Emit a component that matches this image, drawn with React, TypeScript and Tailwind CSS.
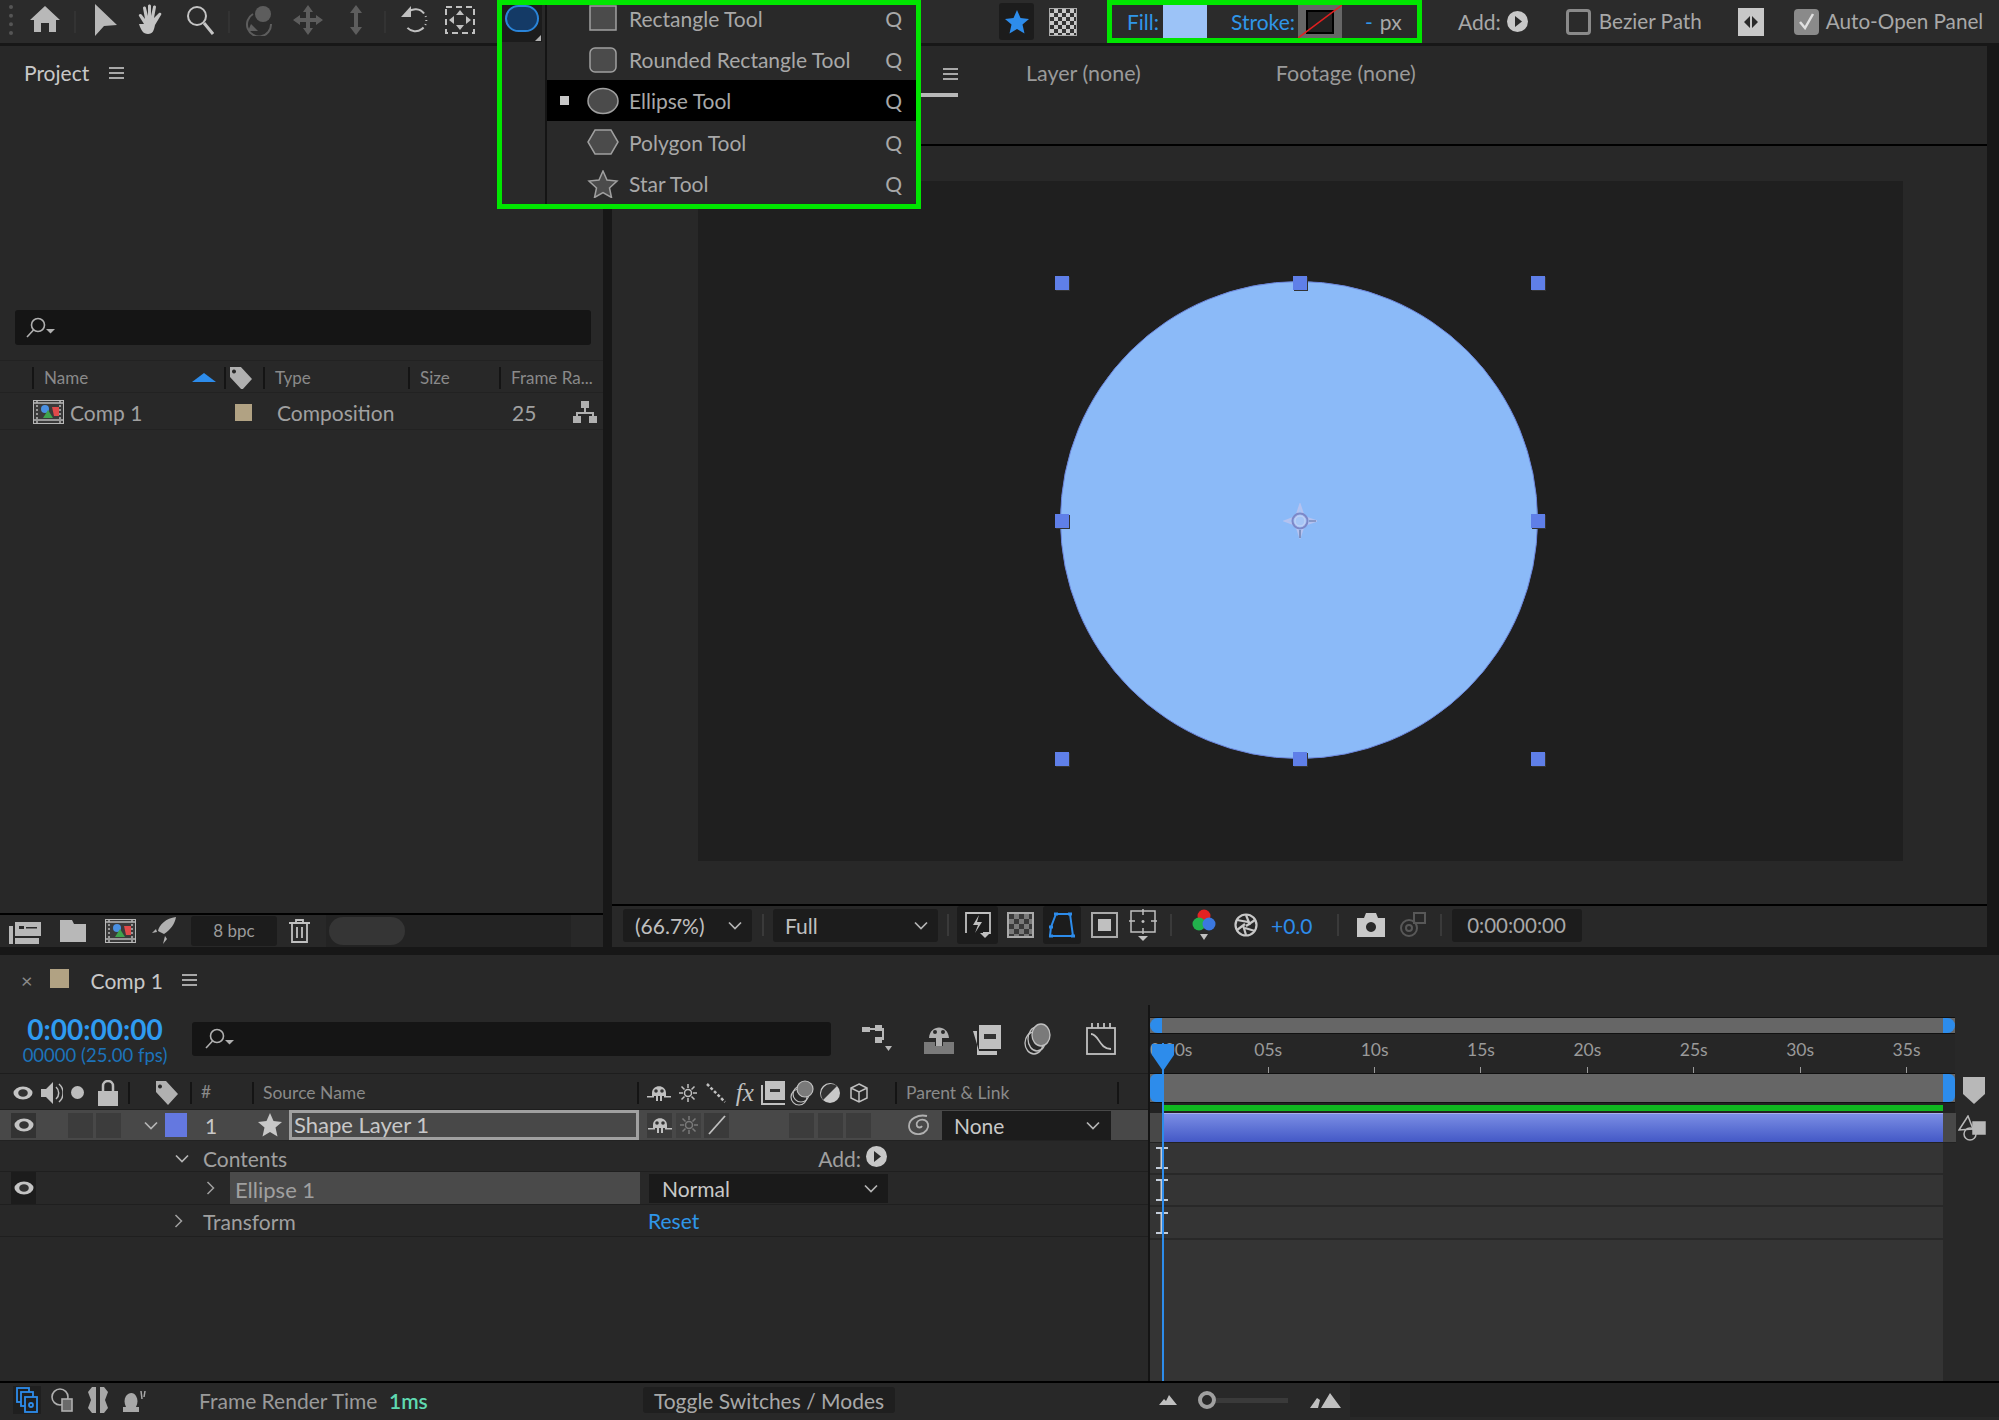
import React from 'react';

type IconProps = { className?: string };

const Hamburger = ({ className = '' }: IconProps) => (
  <div className={`flex flex-col gap-[3px] w-[15px] ${className}`}>
    <div className="h-[2px] bg-[#a8a8a8]"></div>
    <div className="h-[2px] bg-[#a8a8a8]"></div>
    <div className="h-[2px] bg-[#a8a8a8]"></div>
  </div>
);

const Chevron = ({ className = '' }: IconProps) => (
  <svg width="14" height="9" viewBox="0 0 14 9" className={className} fill="none" stroke="#b5b5b5" strokeWidth="1.7">
    <path d="M1 1.5 7 7.5 13 1.5" />
  </svg>
);

const ChevronRight = ({ className = '' }: IconProps) => (
  <svg width="9" height="14" viewBox="0 0 9 14" className={className} fill="none" stroke="#a0a0a0" strokeWidth="1.5">
    <path d="M1.5 1 7.5 7 1.5 13" />
  </svg>
);

const Eye = () => (
  <svg width="20" height="14" viewBox="0 0 20 14">
    <ellipse cx="10" cy="7" rx="9.500" ry="6.500" fill="#c4c4c4" />
    <ellipse cx="10" cy="7" rx="4.800" ry="3.800" fill="#333" />
  </svg>
);

const SearchIcon = () => (
  <svg width="32" height="24" viewBox="0 0 32 24" fill="none" stroke="#b0b0b0" strokeWidth="1.6">
    <circle cx="13" cy="9" r="6.5" />
    <path d="M8.5 14 2 21" />
    <path d="M21 13h9l-4.5 4.5Z" fill="#b0b0b0" stroke="none" />
  </svg>
);

const Tag = ({ className = '' }: IconProps) => (
  <svg width="24" height="26" viewBox="0 0 24 26" className={className}>
    <path fillRule="evenodd" d="M1 1h10l12 13-10 11L1 12ZM5 4.500a2 2 0 1 0 .01 0Z" fill="#b0b0b0" />
  </svg>
);

const Sep = ({ className = '' }: IconProps) => <div className={`w-[2px] h-[22px] shrink-0 bg-[#141414] ${className}`}></div>;

const CompIcon = () => (
  <svg width="31" height="24" viewBox="0 0 31 24">
    <rect x="0.500" y="0.500" width="30" height="23" fill="#3a3a3a" stroke="#b8b8b8" />
    <path d="M0 3h31M0 20h31" stroke="#b8b8b8" strokeWidth="1.500" />
    <path d="M4 1v22M27 1v22" stroke="#b8b8b8" strokeWidth="1.500" strokeDasharray="2 2" />
    <circle cx="12" cy="9" r="4" fill="#4a90e2" />
    <path d="M19 7h7v9h-5Z" fill="#e04a4a" />
    <path d="M15 10l5 8h-10Z" fill="#3fa34d" />
  </svg>
);

const FlowIcon = () => (
  <svg width="26" height="24" viewBox="0 0 26 24" fill="#b0b0b0">
    <rect x="9" y="1" width="8" height="7" />
    <rect x="1" y="16" width="8" height="7" />
    <rect x="17" y="16" width="8" height="7" />
    <path d="M12 8h2v4h8v4h-2v-2H6v2H4v-4h8Z" />
  </svg>
);

const PlayCircle = () => (
  <svg width="21" height="21" viewBox="0 0 21 21">
    <circle cx="10.500" cy="10.500" r="10.500" fill="#c8c8c8" />
    <path d="M8 5l7 5.500-7 5.500Z" fill="#2a2a2a" />
  </svg>
);

const LabelCube = () => <div className="w-[17px] h-[17px] bg-[#b1a283]"></div>;

const ShyIcon = () => (
  <svg width="24" height="20" viewBox="0 0 24 20" fill="#c0c0c0">
    <path d="M5 10C5 1 19 1 19 10v3h-4v5h-2v-5h-2v5H9v-5H5Z" />
    <circle cx="9" cy="8" r="1.800" fill="#333" />
    <circle cx="15" cy="8" r="1.800" fill="#333" />
    <path d="M0 13h7v1.500H0ZM17 13h7v1.500h-7Z" />
  </svg>
);

const SunIcon = ({ color = '#c0c0c0' }: { color?: string }) => (
  <svg width="18" height="18" viewBox="0 0 18 18" fill="none" stroke={color} strokeWidth="1.500">
    <circle cx="9" cy="9" r="3.500" />
    <path d="M9 0v4M9 14v4M0 9h4M14 9h4M2.500 2.500l3 3M12.500 12.500l3 3M15.500 2.500l-3 3M5.500 12.500l-3 3" />
  </svg>
);

const menuItems = [
  { name: 'Rectangle Tool', rowClass: 'h-[34px] pb-[8px]', shape: <rect x="4" y="2" width="26" height="24" fill="#4b4b4b" stroke="#a0a0a0" strokeWidth="1.500" /> },
  { name: 'Rounded Rectangle Tool', rowClass: 'h-[41px]', shape: <rect x="4" y="2" width="26" height="24" rx="5" fill="#4b4b4b" stroke="#a0a0a0" strokeWidth="1.500" /> },
  { name: 'Ellipse Tool', rowClass: 'h-[41px] bg-black', shape: <ellipse cx="17" cy="14" rx="15" ry="12.500" fill="#4b4b4b" stroke="#a0a0a0" strokeWidth="1.500" />, active: true },
  { name: 'Polygon Tool', rowClass: 'h-[42px]', shape: <path d="M9 2h16l7 12-7 12H9L2 14Z" fill="#4b4b4b" stroke="#a0a0a0" strokeWidth="1.500" /> },
  { name: 'Star Tool', rowClass: 'h-[41px]', shape: <path d="M17 1l4 9 10 1-7.500 7 2 9.500-8.500-5-8.500 5 2-9.500L3 11l10-1Z" fill="#4b4b4b" stroke="#a0a0a0" strokeWidth="1.500" /> },
];

const ShapeMenu = () => (
  <div className="absolute top-0 left-[497px] w-[424px] h-[209px] border-[5px] border-[#00e600] bg-[#292929] flex z-20 overflow-hidden">
    <div className="w-[43px] shrink-0">
      <div className="w-[40px] h-[37px] bg-[#1c1c1c] flex items-start justify-center relative">
        <div className="w-[34px] h-[27px] rounded-full bg-[#143a66] border-2 border-[#2a84d8]"></div>
        <div className="absolute right-[1px] bottom-[1px] w-0 h-0 border-l-[6px] border-l-transparent border-b-[6px] border-b-[#b0b0b0]"></div>
      </div>
    </div>
    <div className="flex-1 border-l-2 border-[#141414] text-[21px] text-[#a8a8a8]">
      {menuItems.map((item) => (
        <div key={item.name} className={`flex items-center ${item.rowClass}`}>
          <div className="w-[12px] ml-[11px] flex justify-center">
            {item.active && <div className="w-[9px] h-[9px] bg-[#c8c8c8]"></div>}
          </div>
          <svg width="34" height="28" viewBox="0 0 34 28" className="ml-[16px]">
            {item.shape}
          </svg>
          <span className="ml-[9px] leading-none">{item.name}</span>
          <span className="ml-auto mr-[14px] leading-none">Q</span>
        </div>
      ))}
    </div>
  </div>
);

const Toolbar = () => (
  <div className="h-[43px] bg-[#2b2b2b] flex items-center shrink-0 relative">
    <div className="w-[6px] h-[30px] ml-[9px] -mt-[4px] border-l-4 border-dotted border-[#555]"></div>
    <div className="ml-[13px] w-[34px] -mt-[5px] flex justify-center">
      <svg width="32" height="28" viewBox="0 0 32 28" fill="#b8b8b8"><path d="M16 1 31 15h-4v12h-7v-9h-8v9H5V15H1Z" /></svg>
    </div>
    <Sep className="ml-[12px] !bg-[#333]" />
    <div className="ml-[10px] w-[40px] -mt-[4px] flex justify-center">
      <svg width="26" height="32" viewBox="0 0 26 32" fill="#b8b8b8"><path d="M2 0 24 21 11 22 2 32Z" /></svg>
    </div>
    <div className="w-[52px] -mt-[4px] flex justify-center">
      <svg width="30" height="32" viewBox="0 0 30 32" fill="#c4c4c4"><path d="M7 20 2 12c-1-2 2-3 3-1l3 4-2-11c0-2 3-2 3 0l2 8V2c0-2 3-2 3 0v10l2-9c0-2 3-2 3 0l-2 11 5-5c2-1 3 1 2 2l-6 10c-1 5-2 9-7 9-5 0-7-4-9-10Z" /></svg>
    </div>
    <div className="w-[42px] -mt-[4px] flex justify-center">
      <svg width="30" height="32" viewBox="0 0 30 32" fill="none" stroke="#c4c4c4" strokeWidth="2"><circle cx="13" cy="12" r="9" /><path d="M20 19 29 30" strokeWidth="3" /></svg>
    </div>
    <Sep className="ml-[8px] !bg-[#333]" />
    <div className="ml-[12px] w-[40px] -mt-[4px] flex justify-center opacity-50">
      <svg width="34" height="32" viewBox="0 0 34 32"><circle cx="18" cy="10" r="8" fill="#909090" /><path d="M8 10a12 12 0 1 0 18 10" fill="none" stroke="#909090" strokeWidth="2" /><path d="M6 20l7 7H3Z" fill="#909090" /></svg>
    </div>
    <div className="ml-[6px] w-[40px] -mt-[4px] flex justify-center opacity-50">
      <svg width="32" height="32" viewBox="0 0 32 32" fill="#909090"><path d="M16 1l5 7h-3v6h6v-3l7 5-7 5v-3h-6v6h3l-5 7-5-7h3v-6H8v3l-7-5 7-5v3h6V8h-3Z" /></svg>
    </div>
    <div className="ml-[8px] w-[40px] -mt-[4px] flex justify-center opacity-50">
      <svg width="20" height="32" viewBox="0 0 20 32" fill="#909090"><path d="M10 1l6 8h-4v14h4l-6 8-6-8h4V9H4Z" /></svg>
    </div>
    <Sep className="ml-[8px] !bg-[#333]" />
    <div className="ml-[8px] w-[40px] -mt-[4px] flex justify-center">
      <svg width="30" height="30" viewBox="0 0 30 30" fill="none" stroke="#c0c0c0" strokeWidth="2"><path d="M9 7a11 11 0 1 1-2 14" strokeDasharray="18 3 1 3 1 3 1 3" /><path d="M12 1v11H2Z" fill="#c0c0c0" stroke="none" /></svg>
    </div>
    <div className="ml-[6px] w-[40px] -mt-[4px] flex justify-center">
      <svg width="30" height="28" viewBox="0 0 30 28" fill="#c0c0c0"><rect x="1" y="1" width="28" height="26" fill="none" stroke="#c0c0c0" strokeWidth="2" strokeDasharray="6 4" /><path d="M15 4l4 5h-8ZM15 24l4-5h-8ZM4 14l5-4v8ZM26 14l-5-4v8Z" /></svg>
    </div>
    <div className="w-[519px] shrink-0"></div>
    <div className="w-[35px] h-[37px] rounded-[3px] bg-[#1c1c1c] flex items-center justify-center">
      <svg width="24" height="24" viewBox="0 0 24 24" fill="#2d8ceb"><path d="M12 0l3.500 8 8.500 1-6.500 5.500 2 9L12 19l-7.500 4.500 2-9L0 9l8.500-1Z" /></svg>
    </div>
    <div className="ml-[15px] w-[28px] h-[28px] bg-[repeating-conic-gradient(#c8c8c8_0_25%,#333_0_50%)] bg-[length:8px_8px] border border-[#aaa]"></div>
    <div className="ml-[30px] w-[315px] h-[43px] border-[5px] border-[#00e600] flex items-stretch text-[21px] leading-none">
      <span className="ml-[15px] self-center text-[#2f96e8]">Fill:</span>
      <div className="ml-[4px] w-[44px] bg-[#9cc3f7]"></div>
      <span className="ml-[24px] self-center text-[#2f96e8]">Stroke:</span>
      <div className="ml-[3px] w-[44px] bg-[#666] relative flex items-center justify-center overflow-hidden">
        <div className="w-[28px] h-[24px] bg-[#222] border-2 border-black"></div>
        <svg width="44" height="33" viewBox="0 0 44 33" className="absolute inset-0"><path d="M0 33 44 0" stroke="#e02020" strokeWidth="1.500" /></svg>
      </div>
      <span className="ml-[23px] self-center text-[#2f96e8]">-</span>
      <span className="ml-[7px] self-center text-[#a8a8a8]">px</span>
    </div>
    <span className="ml-[36px] text-[21px] text-[#a8a8a8]">Add:</span>
    <div className="ml-[6px]"><PlayCircle /></div>
    <div className="ml-[38px] w-[25px] h-[26px] rounded-[4px] border-[3px] border-[#8a8a8a]"></div>
    <span className="ml-[8px] text-[20.700px] text-[#a8a8a8]">Bezier Path</span>
    <div className="ml-[36px] w-[26px] h-[28px] bg-[#c8c8c8] flex items-center justify-center">
      <svg width="14" height="12" viewBox="0 0 14 12" fill="#2a2a2a"><path d="M6 0v12L0 6ZM8 0v12l6-6Z" /></svg>
    </div>
    <div className="ml-[30px] w-[25px] h-[26px] rounded-[4px] bg-[#8a8a8a] flex items-center justify-center">
      <svg width="17" height="17" viewBox="0 0 17 17" fill="none" stroke="#e0e0e0" strokeWidth="2.500"><path d="M2 9l5 6 8-14" /></svg>
    </div>
    <span className="ml-[7px] text-[20.700px] text-[#a8a8a8] whitespace-nowrap">Auto-Open Panel</span>
  </div>
);

const columns = [
  { label: 'Name', width: 'w-[192px]' },
  { label: '', width: 'w-[39px]' },
  { label: 'Type', width: 'w-[145px]' },
  { label: 'Size', width: 'w-[91px]' },
  { label: 'Frame Ra...', width: 'w-[94px]' },
];

const ProjectPanel = () => (
  <div className="w-[603px] shrink-0 bg-[#282828] flex flex-col text-[#a0a0a0]">
    <div className="h-[264px] shrink-0 flex items-start pt-[17px] pl-[24px]">
      <span className="text-[21px] leading-[20px] text-[#c8c8c8]">Project</span>
      <Hamburger className="ml-[20px] mt-[4px]" />
    </div>
    <div className="mx-[15px] mr-[12px] h-[35px] rounded-[3px] bg-[#151515] flex items-center pl-[10px]">
      <SearchIcon />
    </div>
    <div className="mt-[15px] h-[33px] pt-[2px] flex items-center border-y border-[#222] text-[17px] text-[#8a8a8a]">
      {columns.map((col, i) => (
        <div key={i} className={`${col.width} h-[22px] flex items-center shrink-0 ${i === 0 ? 'ml-[32px]' : ''} border-l-2 border-[#141414] pl-[10px] leading-none relative whitespace-nowrap overflow-hidden`}>
          {col.label}
          {i === 0 && <div className="ml-auto mr-[8px] w-0 h-0 border-x-[12px] border-x-transparent border-b-[9px] border-b-[#2d8ceb]"></div>}
          {i === 1 && <Tag className="-ml-[7px]" />}
        </div>
      ))}
    </div>
    <div className="h-[37px] pt-[2px] flex items-center border-b border-[#222] text-[21px] text-[#a0a0a0]">
      <div className="ml-[33px]"><CompIcon /></div>
      <span className="ml-[6px] w-[165px] leading-none">Comp 1</span>
      <LabelCube />
      <span className="ml-[25px] w-[235px] leading-none">Composition</span>
      <span className="w-[47px] leading-none">25</span>
      <div className="ml-[13px]"><FlowIcon /></div>
    </div>
    <div className="flex-1"></div>
    <div className="h-[34px] border-t-2 border-black flex items-center text-[#bdbdbd]">
      <div className="ml-[9px] w-[32px]">
        <svg width="32" height="26" viewBox="0 0 32 26" fill="#b8b8b8"><path d="M6 4h26v14H6Z" /><path d="M10 8h5v3h-5ZM17 9h11v1.500H17Z" fill="#2a2a2a" /><path d="M0 8h4v18H0ZM6 20h24v6H6Z" /></svg>
      </div>
      <div className="ml-[19px]">
        <svg width="26" height="22" viewBox="0 0 26 22" fill="#b8b8b8"><path d="M0 0h12l2 4h12v18H0Z" /></svg>
      </div>
      <div className="ml-[19px]"><CompIcon /></div>
      <div className="ml-[16px]">
        <svg width="24" height="28" viewBox="0 0 24 28" fill="#b0b0b0"><path d="M24 0C14 1 7 8 6 14l6 3C18 13 23 7 24 0ZM4 12 0 16l5-1ZM13 19l-2 8 4-5Z" /></svg>
      </div>
      <div className="ml-[15px] w-[86px] h-[30px] rounded-[3px] bg-[#1c1c1c] flex items-center justify-center text-[17px] text-[#9a9a9a]">8 bpc</div>
      <div className="ml-[12px]">
        <svg width="21" height="24" viewBox="0 0 21 24" fill="none" stroke="#c0c0c0" strokeWidth="1.800"><path d="M0 4h21M7 4V1h7v3M3 4v19h15V4M8 8v11M13 8v11" /></svg>
      </div>
      <div className="ml-[16px] w-[245px] h-full bg-[#232323] flex items-center pl-[3px]">
        <div className="w-[76px] h-[28px] rounded-full bg-[#353535]"></div>
      </div>
    </div>
  </div>
);

const handleRows = [
  ['corner', 'mid', 'corner'],
  ['mid', 'center', 'mid'],
  ['corner', 'mid', 'corner'],
];

const CompViewer = () => (
  <div className="relative flex-1 bg-[#282828] flex flex-col">
    <div className="ml-[86px] mr-[84px] mt-[35px] h-[680px] bg-[#1f1f1f] flex items-center justify-center shrink-0">
      <div className="relative w-[478px] h-[478px] -ml-[4px] -mt-[3px]">
        <div className="absolute inset-0 rounded-full bg-[#8bbaf8] border border-[#6c86dc]"></div>
        <div className="absolute inset-0 flex flex-col justify-between">
          {handleRows.map((row, r) => (
            <div key={r} className={`flex justify-between items-center -ml-[5px] -mr-[7px] ${r === 0 ? '-mt-[5px]' : r === 2 ? '-mb-[7px]' : ''}`}>
              {row.map((kind, c) =>
                kind === 'center' ? (
                  <svg key={c} width="34" height="36" viewBox="0 0 34 36" fill="none">
                    <path d="M17 2 21 14 33 18 21 22 17 34 13 22 2 18 13 14Z" fill="#a6c6f6" stroke="#b4c2f0" strokeWidth="2" />
                    <circle cx="17" cy="18" r="7.500" stroke="#7c88c8" strokeWidth="2" />
                    <circle cx="17" cy="18" r="5" stroke="#c4d6f8" strokeWidth="1" />
                    <path d="M17 27v8M26 18h7" stroke="#5f6f9f" strokeWidth="1.200" />
                  </svg>
                ) : (
                  <div key={c} className="w-[14px] h-[14px] bg-[#5f7fe8] shadow-[1px_1px_0_#333]"></div>
                )
              )}
            </div>
          ))}
        </div>
      </div>
    </div>
  </div>
);

const ViewerBar = () => (
  <div className="h-[43px] pb-[3px] border-t-2 border-black bg-[#282828] flex items-center text-[#c0c0c0] text-[21px]">
    <div className="ml-[11px] w-[129px] h-[33px] rounded-[3px] bg-[#1c1c1c] flex items-center pl-[12px] leading-none">
      (66.7%)
      <Chevron className="ml-auto mr-[10px]" />
    </div>
    <Sep className="ml-[10px] !bg-[#3a3a3a]" />
    <div className="ml-[9px] w-[165px] h-[33px] rounded-[3px] bg-[#1c1c1c] flex items-center pl-[12px] leading-none">
      Full
      <Chevron className="ml-auto mr-[10px]" />
    </div>
    <Sep className="ml-[9px] !bg-[#3a3a3a]" />
    <div className="ml-[8px] w-[41px] h-[38px] rounded-[3px] bg-[#1c1c1c] flex items-center justify-center">
      <svg width="28" height="28" viewBox="0 0 28 28" fill="none" stroke="#c0c0c0" strokeWidth="1.800"><path d="M2 22V2h24v20h-7" /><path d="M15 4 9 14h5l-3 8 7-11h-5Z" fill="#c0c0c0" stroke="none" /><path d="M16 22h10l-5 5Z" fill="#c0c0c0" stroke="none" /></svg>
    </div>
    <div className="ml-[9px] w-[27px] h-[26px] bg-[repeating-conic-gradient(#7a7a7a_0_25%,#3a3a3a_0_50%)] bg-[length:10px_10px] border-2 border-[#aaa]"></div>
    <div className="ml-[9px] w-[38px] h-[38px] rounded-[3px] bg-[#1c1c1c] flex items-center justify-center">
      <svg width="30" height="28" viewBox="0 0 30 28" fill="none" stroke="#2d8ceb" strokeWidth="2"><path d="M9 3h14l3 22H3l1-9Z" /><path d="M2 16h4M2 25h4M24 25h4M21 3h4M7 3h4" strokeWidth="3" /></svg>
    </div>
    <div className="ml-[10px] w-[27px] h-[26px] border-2 border-[#aaa] flex items-center justify-center">
      <div className="w-[13px] h-[12px] bg-[#c0c0c0]"></div>
    </div>
    <div className="ml-[11px]">
      <svg width="28" height="32" viewBox="0 0 28 32" fill="none" stroke="#c0c0c0" strokeWidth="1.500"><rect x="2" y="2" width="24" height="21" /><path d="M14 0v6M14 19v6M0 12h6M22 12h6M14 11v3M12.500 12.500h3" /><path d="M9 27h10l-5 5Z" fill="#c0c0c0" stroke="none" /></svg>
    </div>
    <Sep className="ml-[13px] !bg-[#3a3a3a]" />
    <div className="ml-[20px]">
      <svg width="24" height="34" viewBox="0 0 24 34">
        <circle cx="12" cy="8" r="6.500" fill="#e32222" />
        <circle cx="7" cy="16" r="6.500" fill="#22b14c" />
        <circle cx="17" cy="16" r="6.500" fill="#3b78e0" />
        <path d="M8 26h8l-4 6Z" fill="#c0c0c0" />
      </svg>
    </div>
    <div className="ml-[18px]">
      <svg width="24" height="26" viewBox="0 0 24 26" fill="none" stroke="#c8c8c8" strokeWidth="2.200"><circle cx="12" cy="13" r="10.500" /><path d="M12 3 16 13M21 8 12 14M21 19 11 16M12 23 9 13M3 18 11 12M3 8 14 10" /></svg>
    </div>
    <span className="ml-[13px] text-[#2d8ceb] leading-none">+0.0</span>
    <Sep className="ml-[24px] !bg-[#3a3a3a]" />
    <div className="ml-[18px]">
      <svg width="28" height="26" viewBox="0 0 28 26" fill="#c8c8c8"><path fillRule="evenodd" d="M0 6h7l2-5h10l2 5h7v19H0Zm14 4a5 5 0 1 0 .01 0Z" /></svg>
    </div>
    <div className="ml-[14px] opacity-40">
      <svg width="28" height="28" viewBox="0 0 28 28" fill="none" stroke="#a0a0a0" strokeWidth="2"><circle cx="10" cy="17" r="8" /><circle cx="10" cy="17" r="3" /><rect x="15" y="2" width="11" height="10" /></svg>
    </div>
    <Sep className="ml-[13px] !bg-[#3a3a3a]" />
    <div className="ml-[10px] w-[130px] h-[33px] rounded-[3px] bg-[#1c1c1c] flex items-center justify-center leading-none text-[20.500px] text-[#a8a8a8]">0:00:00:00</div>
  </div>
);

const tickLabels = ['05s', '10s', '15s', '20s', '25s', '30s', '35s'];

const Box = ({ className = '' }: IconProps) => <div className={`w-[25px] h-[25px] bg-[#3a3a3a] flex items-center justify-center ${className}`}></div>;

const switchIcons = [
  <ShyIcon key="shy" />,
  <SunIcon key="sun" />,
  <svg key="quality" width="20" height="20" viewBox="0 0 20 20" stroke="#c0c0c0" strokeWidth="2.500" strokeDasharray="3 2" fill="none"><path d="M1 1 19 19" /></svg>,
  <span key="fx" className="text-[25px] leading-none italic font-[family-name:'Liberation_Serif',serif] text-[#c0c0c0]">fx</span>,
  <svg key="film" width="24" height="24" viewBox="0 0 24 24" fill="#c0c0c0"><path d="M4 0h20v19H4Z" /><path d="M9 8h10v3H9Z" fill="#333" /><path d="M0 4h2v18h22v2H0Z" /></svg>,
  <svg key="blur" width="24" height="26" viewBox="0 0 24 26" fill="none" stroke="#c0c0c0" strokeWidth="1.200"><circle cx="9" cy="17" r="8" /><circle cx="11" cy="14" r="8" /><circle cx="15" cy="9" r="8" fill="#7a7a7a" /></svg>,
  <svg key="adjust" width="20" height="20" viewBox="0 0 20 20"><circle cx="10" cy="10" r="10" fill="#c8c8c8" /><path d="M3 17A10 10 0 0 1 17 3Z" fill="#333" /></svg>,
  <svg key="cube" width="18" height="20" viewBox="0 0 18 20" fill="none" stroke="#c0c0c0" strokeWidth="1.500"><path d="M9 1l8 4v10l-8 4-8-4V5ZM1 5l8 4 8-4M9 9v10" /></svg>,
];

const TimelineHeader = () => (
  <div className="h-[37px] pt-[2px] flex items-center border-y border-[#1d1d1d] text-[17.500px] text-[#8a8a8a]">
    <div className="ml-[13px]"><Eye /></div>
    <div className="ml-[8px]">
      <svg width="22" height="24" viewBox="0 0 22 24" fill="#bdbdbd"><path d="M0 8h5l7-7v22l-7-7H0Z" /><path d="M15 6a8 8 0 0 1 0 12M18 3a12 12 0 0 1 0 18" fill="none" stroke="#bdbdbd" strokeWidth="1.500" /></svg>
    </div>
    <div className="ml-[8px] w-[13px] h-[13px] rounded-full bg-[#bdbdbd]"></div>
    <div className="ml-[14px]">
      <svg width="20" height="26" viewBox="0 0 20 26" fill="#bdbdbd"><path d="M0 11h20v15H0Z" /><path d="M5 11V6a5 5 0 0 1 10 0v5" fill="none" stroke="#bdbdbd" strokeWidth="2.500" /></svg>
    </div>
    <Sep className="ml-[10px]" />
    <Tag className="ml-[25px]" />
    <Sep className="ml-[11px]" />
    <span className="ml-[9px] w-[51px]">#</span>
    <Sep />
    <span className="ml-[9px] w-[374px] leading-none">Source Name</span>
    <Sep />
    <div className="ml-[6px] flex items-center">
      {switchIcons.map((icon, i) => (
        <div key={i} className="w-[28.500px] flex justify-center shrink-0">{icon}</div>
      ))}
    </div>
    <Sep className="ml-[22px]" />
    <span className="ml-[9px] w-[211px] leading-none">Parent &amp; Link</span>
    <Sep />
  </div>
);

const LayerRow = () => (
  <div className="h-[31px] flex items-center bg-[#484848] border-b border-[#222] text-[#c8c8c8]">
    <div className="ml-[11px] w-[25px] h-[25px] bg-[#333] flex items-center justify-center"><Eye /></div>
    <Box className="ml-[32px] !bg-[#3c3c3c]" />
    <Box className="ml-[3px] !bg-[#3c3c3c]" />
    <Chevron className="ml-[23px] !w-[14px]" />
    <div className="ml-[7px] w-[22px] h-[24px] bg-[#6478e0]"></div>
    <span className="ml-[18px] w-[53px] leading-none text-[21px]">1</span>
    <svg width="24" height="24" viewBox="0 0 24 24" fill="#c8c8c8"><path d="M12 0l3.500 8 8.500 1-6.500 5.500 2 9L12 19l-7.500 4.500 2-9L0 9l8.500-1Z" /></svg>
    <div className="ml-[7px] w-[350px] h-[30px] border-[3px] border-[#a0a0a0] flex items-center pl-[2px] leading-none text-[22px]">Shape Layer 1</div>
    <div className="ml-[8px] w-[25px] h-[25px] bg-[#3a3a3a] flex items-center justify-center"><ShyIcon /></div>
    <div className="ml-[4px] w-[25px] h-[25px] bg-[#3f3f3f] flex items-center justify-center"><SunIcon color="#7a7a7a" /></div>
    <div className="ml-[3px] w-[25px] h-[25px] bg-[#3a3a3a] flex items-center justify-center">
      <svg width="20" height="20" viewBox="0 0 20 20" stroke="#c0c0c0" strokeWidth="1.800"><path d="M2 19 18 1" /></svg>
    </div>
    <Box className="ml-[60px] !bg-[#3c3c3c]" />
    <Box className="ml-[4px] !bg-[#3c3c3c]" />
    <Box className="ml-[3px] !bg-[#3c3c3c]" />
    <div className="ml-[36px]">
      <svg width="24" height="24" viewBox="0 0 24 24" fill="none" stroke="#b0b0b0" strokeWidth="1.800"><path d="M20 3C11 1 2 6 2 13c0 6 6 9 11 8 6-1 9-6 8-10-1-4-5-5-8-4-3 1-4 4-3 6s4 2 5 0" /></svg>
    </div>
    <div className="ml-[11px] w-[169px] h-[29px] bg-[#1c1c1c] flex items-center pl-[12px] leading-none text-[21px]">
      None
      <Chevron className="ml-auto mr-[11px]" />
    </div>
  </div>
);

const TimelineLeft = () => (
  <div className="w-[1148px] shrink-0 flex flex-col">
    <div className="h-[68px] shrink-0 flex items-center">
      <div className="w-[192px] shrink-0 flex flex-col items-center">
        <span className="text-[28px] leading-[32px] font-bold text-[#2f9bf0] -ml-[2px]">0:00:00:00</span>
        <span className="text-[18.500px] leading-[20px] text-[#1c73ba] -ml-[2px]">00000 (25.00 fps)</span>
      </div>
      <div className="w-[639px] h-[34px] rounded-[3px] bg-[#151515] flex items-center pl-[12px]"><SearchIcon /></div>
      <div className="ml-[30px]">
        <svg width="32" height="30" viewBox="0 0 32 30" fill="#b8b8b8"><path d="M1 3h8v5H1ZM14 1h7v6h-7ZM14 13h7v6h-7ZM9 4h14v2H9ZM21 4h2v12h-2Z" /><path d="M24 22h7l-3.500 5Z" /></svg>
      </div>
      <div className="ml-[30px]"><svg width="32" height="32" viewBox="0 0 32 32" fill="#b0b0b0"><path d="M6 15C7 1 25 1 26 15h-7v8h-6v-8Z" /><circle cx="12" cy="9" r="2" fill="#2a2a2a" /><circle cx="20" cy="9" r="2" fill="#2a2a2a" /><path d="M1 19h11v4h8v-4h11v12H1Z" fill="#7a7a7a" /></svg></div>
      <div className="ml-[18px]"><svg width="28" height="32" viewBox="0 0 28 32" fill="#c0c0c0"><path d="M6 2h22v24H6Z" /><path d="M11 11h12v5H11Z" fill="#333" /><path d="M0 8h4v24h20v-4H6Z" /></svg></div>
      <div className="ml-[22px]"><svg width="28" height="32" viewBox="0 0 28 32" fill="none" stroke="#c0c0c0" strokeWidth="1.300"><ellipse cx="11" cy="20" rx="9" ry="11" /><ellipse cx="14" cy="16" rx="9" ry="12" /><ellipse cx="18" cy="12" rx="9" ry="11" fill="#7a7a7a" /></svg></div>
      <div className="ml-[35px]"><svg width="30" height="32" viewBox="0 0 30 32" fill="none" stroke="#c0c0c0" strokeWidth="1.800"><rect x="1" y="5" width="28" height="26" /><path d="M6 0v5M12 0v5M18 0v5M24 0v5" /><path d="M5 11c8 0 8 15 20 15" /></svg></div>
    </div>
    <TimelineHeader />
    <LayerRow />
    <div className="h-[31px] pt-[4px] flex items-center border-b border-[#1f1f1f] text-[21px] text-[#a0a0a0]">
      <Chevron className="ml-[175px]" />
      <span className="ml-[14px] leading-none">Contents</span>
      <span className="ml-auto leading-none mr-[5px]">Add:</span>
      <div className="mr-[261px] -mt-[3px]"><PlayCircle /></div>
    </div>
    <div className="h-[33px] flex items-center border-b border-[#1f1f1f] text-[21px] text-[#a0a0a0]">
      <div className="ml-[11px] w-[25px] h-[32px] bg-[#1c1c1c] flex items-center justify-center"><Eye /></div>
      <ChevronRight className="ml-[170px]" />
      <div className="ml-[15px] w-[410px] h-[32px] pt-[3px] bg-[#4a4a4a] flex items-center pl-[5px] leading-none text-[22px]">Ellipse 1</div>
      <div className="ml-[9px] w-[239px] h-[29px] bg-[#1a1a1a] flex items-center pl-[13px] leading-none text-[#c8c8c8]">
        Normal
        <Chevron className="ml-auto mr-[10px]" />
      </div>
    </div>
    <div className="h-[32px] flex items-center border-b border-[#1f1f1f] text-[21px] text-[#a0a0a0]">
      <ChevronRight className="ml-[174px]" />
      <span className="ml-[20px] pt-[2px] w-[445px] leading-none">Transform</span>
      <span className="text-[#2f96e8] leading-none">Reset</span>
    </div>
  </div>
);

const WorkEnd = ({ className = '' }: IconProps) => <div className={`w-[12px] bg-[#2d8ceb] ${className}`}></div>;

const KeyMark = () => (
  <svg width="14" height="22" viewBox="0 0 14 22" fill="#c4ccd8" className="-ml-[1px]">
    <path d="M1 0h12v2H8.500v18H13v2H1v-2h4.500V2H1Z" />
  </svg>
);

const TimelineRight = () => (
  <div className="flex-1 flex flex-col relative">
    <div className="h-[12px] shrink-0"></div>
    <div className="w-[805px] h-[17px] bg-[#666] border-y border-[#111] flex justify-between">
      <WorkEnd className="rounded-l-full" />
      <WorkEnd className="rounded-r-full" />
    </div>
    <div className="w-[805px] h-[39px] bg-[#262626] flex text-[17.500px] text-[#9a9a9a] leading-none">
      <div className="w-[65px] shrink-0 pt-[7px] text-right pr-[28px]">0:00s</div>
      {tickLabels.map((label) => (
        <div key={label} className="w-[106.400px] shrink-0 flex flex-col items-center pt-[7px]">
          <span>{label}</span>
          <div className="mt-[8px] w-px h-[9px] bg-[#9a9a9a]"></div>
        </div>
      ))}
    </div>
    <div className="w-[805px] h-[30px] bg-[#666] border-y border-[#111] flex justify-between">
      <WorkEnd className="rounded-l-md" />
      <WorkEnd className="rounded-r-md" />
    </div>
    <div className="w-[805px] h-[10px] bg-[#222] flex items-center pl-[12px] pr-[12px]">
      <div className="w-full h-[6px] bg-[#10b820]"></div>
    </div>
    <div className="w-[806px] h-[30px] bg-[#484848] border-b border-[#222] pl-[12px] pr-[13px]">
      <div className="w-full h-full border-t border-[#a5b1ec] bg-gradient-to-b from-[#7b8de4] to-[#4458c6]"></div>
    </div>
    <div className="flex-1 flex flex-col w-[793px] bg-[#343434]">
      <div className="h-[32px] border-b-2 border-[#282828] flex items-center pl-[6px]"><KeyMark /></div>
      <div className="h-[32px] border-b-2 border-[#282828] flex items-center pl-[6px]"><KeyMark /></div>
      <div className="h-[33px] border-b-2 border-[#282828] flex items-center pl-[6px]"><KeyMark /></div>
    </div>
    <div className="absolute left-[12px] top-[38px] bottom-0 w-[1.500px] bg-[#2d8ceb]"></div>
    <svg width="24" height="27" viewBox="0 0 24 27" className="absolute left-[1px] top-[39px]" fill="#2d8ceb">
      <path d="M1 0h22v11L12 27 1 11Z" />
    </svg>
    <div className="absolute left-[813px] top-[72px]">
      <svg width="22" height="27" viewBox="0 0 22 27" fill="#b8b8b8"><path d="M0 0h22v17L11 27 0 17Z" /></svg>
    </div>
    <div className="absolute left-[808px] top-[110px]">
      <svg width="28" height="26" viewBox="0 0 28 26" fill="none" stroke="#b8b8b8" strokeWidth="1.500"><path d="M1 15 10 1l5 13Z" /><circle cx="12" cy="19" r="6" /><rect x="15" y="7" width="12" height="12" fill="#b8b8b8" /></svg>
    </div>
  </div>
);

const StatusBar = () => (
  <div className="h-[37px] pb-[3px] shrink-0 flex items-center text-[21px] text-[#9a9a9a]">
    <div className="ml-[13px] w-[28px] h-[28px] bg-[#1f1f1f] flex items-center justify-center">
      <svg width="22" height="26" viewBox="0 0 22 26" fill="none" stroke="#2d8ceb" strokeWidth="1.800"><rect x="1" y="1" width="12" height="14" /><rect x="5" y="5" width="12" height="14" fill="#1f1f1f" /><rect x="9" y="10" width="12" height="15" fill="#1f1f1f" /><circle cx="15" cy="18" r="2" /></svg>
    </div>
    <div className="ml-[10px]">
      <svg width="24" height="26" viewBox="0 0 24 26" fill="none" stroke="#b0b0b0" strokeWidth="1.600"><circle cx="9" cy="10" r="8" /><rect x="11" y="12" width="10" height="12" fill="#6a6a6a" /></svg>
    </div>
    <div className="ml-[13px]">
      <svg width="20" height="26" viewBox="0 0 20 26" fill="#a8a8a8"><path d="M4 0h4v26H4l-4-5 3-8-3-8ZM12 0h4l4 5-3 8 3 8-4 5h-4Z" /></svg>
    </div>
    <div className="ml-[13px]">
      <svg width="26" height="24" viewBox="0 0 26 24" fill="#a8a8a8"><path d="M2 24v-5h3c-2-4-2-8 0-11 3-4 8-4 10 0 2 3 2 7 0 11h3v5Z" /><path d="M20 3l1 8M24 3l-1 6" stroke="#a8a8a8" strokeWidth="1.500" /></svg>
    </div>
    <span className="ml-[52px] leading-none whitespace-nowrap w-[180px] shrink-0">Frame Render Time</span>
    <span className="ml-[10px] leading-none font-semibold text-[#5fd9b0] w-[40px]">1ms</span>
    <div className="ml-[214px] w-[252px] h-[26px] rounded-[3px] bg-[#1f1f1f] flex items-center justify-center leading-none text-[#a8a8a8]">Toggle Switches / Modes</div>
    <svg width="18" height="10" viewBox="0 0 18 10" fill="#c0c0c0" className="ml-[264px]"><path d="M0 10 5 4l2 2 3-6 8 10Z" /></svg>
    <div className="ml-[21px] w-[18px] h-[18px] rounded-full border-[4px] border-[#a0a0a0] shrink-0"></div>
    <div className="w-[72px] h-[5px] bg-[#3a3a3a]"></div>
    <svg width="32" height="15" viewBox="0 0 32 15" fill="#c0c0c0" className="ml-[21px]"><path d="M9 15H1L8 5l3 2ZM12 15 21 0l11 15Z" /></svg>
    <div className="ml-[9px] flex-1 h-full bg-[#232323]"></div>
  </div>
);

export default function App() {
  return (
    <div className="w-[1999px] h-[1420px] bg-[#171717] flex flex-col overflow-hidden relative font-[family-name:Lato,sans-serif]">
      <Toolbar />
      <ShapeMenu />
      <div className="h-[3px] shrink-0"></div>
      <div className="h-[901px] shrink-0 flex">
        <ProjectPanel />
        <div className="ml-[9px] w-[1375px] bg-[#282828] flex flex-col">
          <div className="h-[100px] shrink-0 border-b-2 border-black flex items-start text-[21.500px] text-[#9a9a9a]">
            <div className="ml-[308px] w-[38px] flex flex-col items-end mt-[22px]">
              <Hamburger />
              <div className="mt-[13px] w-[38px] h-[4px] bg-[#b8b8b8]"></div>
            </div>
            <span className="ml-[68px] mt-[17px] leading-[20px]">Layer (none)</span>
            <span className="ml-[135px] mt-[17px] leading-[20px]">Footage (none)</span>
          </div>
          <CompViewer />
          <ViewerBar />
        </div>
      </div>
      <div className="h-[8px] shrink-0"></div>
      <div className="flex-1 bg-[#282828] flex flex-col min-h-0">
        <div className="h-[50px] shrink-0 flex items-center text-[#c8c8c8]">
          <span className="ml-[21px] text-[20px] text-[#8a8a8a] leading-none">×</span>
          <div className="ml-[17px] w-[19px] h-[19px] -mt-[4px] bg-[#b1a283]"></div>
          <span className="ml-[22px] text-[21px] leading-none">Comp 1</span>
          <Hamburger className="ml-[19px]" />
        </div>
        <div className="flex-1 flex min-h-0 border-b-2 border-black">
          <TimelineLeft />
          <div className="w-[2px] bg-[#141414] shrink-0"></div>
          <TimelineRight />
        </div>
        <StatusBar />
      </div>
    </div>
  );
}
